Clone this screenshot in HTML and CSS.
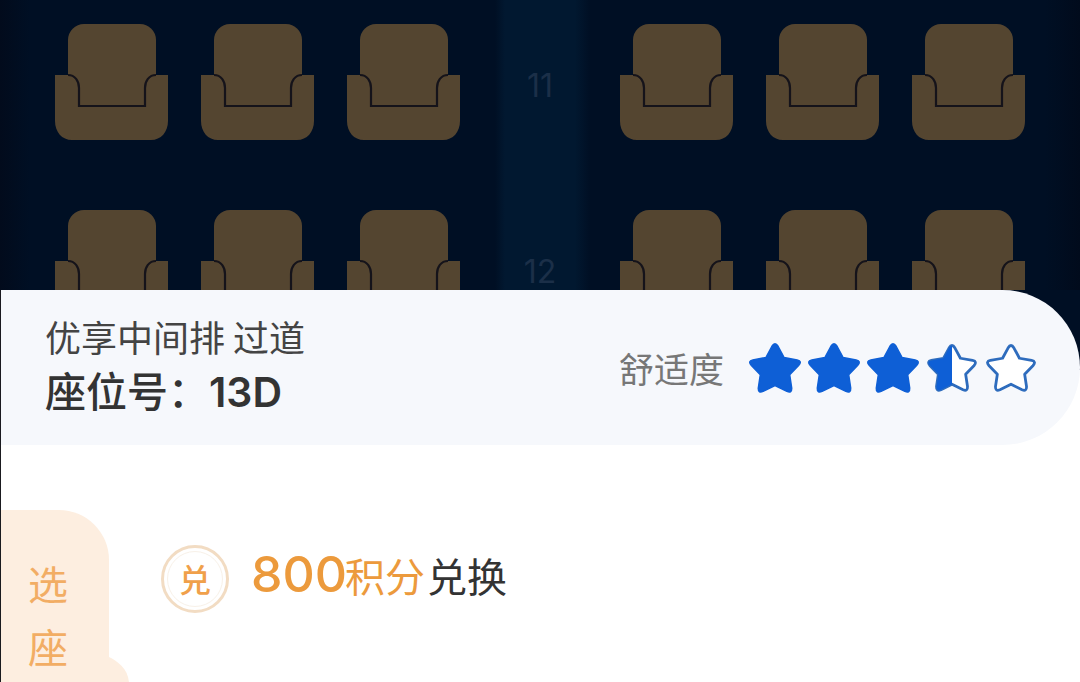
FILE: index.html
```html
<!DOCTYPE html>
<html lang="zh-CN">
<head>
  <meta charset="UTF-8">
  <title>选座</title>
  <link rel="stylesheet" href="styles.css">
</head>
<body>

<svg width="0" height="0" class="defs">
  <defs>
    <symbol id="seat" viewBox="0 0 113 116">
      <rect x="13" y="0" width="88" height="90" rx="16" fill="#544530"/>
      <path d="M0 51H13C20 51 24 57 24 64V82H90V64C90 57 94 51 101 51H113V97C113 108 106 116 96 116H17C7 116 0 108 0 97Z" fill="#544530"/>
      <path d="M13 51C20 51 24 57 24 64V82H90V64C90 57 94 51 101 51" fill="none" stroke="#15131a" stroke-width="2.2"/>
    </symbol>
    <path id="star" d="M23.8 4.5Q27 -1 30.2 4.5L36.1 15.5L49.2 17.9Q54.6 19 50.6 23.6L41.7 32.8L43.7 46Q44 51.5 38.9 49.4L27 43.5L15.1 49.4Q10 51.5 10.3 46L12.3 32.8L3.4 23.6Q-0.6 19 4.8 17.9L17.9 15.5Z"/>
    <clipPath id="half"><rect x="-2" y="-2" width="29" height="56"/></clipPath>
  </defs>
</svg>

<main class="screen">
  <section class="cabin">
    <div class="row">
      <div class="seats">
        <svg class="seat"><use href="#seat"/></svg>
        <svg class="seat"><use href="#seat"/></svg>
        <svg class="seat"><use href="#seat"/></svg>
      </div>
      <div class="row-no">11</div>
      <div class="seats">
        <svg class="seat"><use href="#seat"/></svg>
        <svg class="seat"><use href="#seat"/></svg>
        <svg class="seat"><use href="#seat"/></svg>
      </div>
    </div>
    <div class="row">
      <div class="seats">
        <svg class="seat"><use href="#seat"/></svg>
        <svg class="seat"><use href="#seat"/></svg>
        <svg class="seat"><use href="#seat"/></svg>
      </div>
      <div class="row-no">12</div>
      <div class="seats">
        <svg class="seat"><use href="#seat"/></svg>
        <svg class="seat"><use href="#seat"/></svg>
        <svg class="seat"><use href="#seat"/></svg>
      </div>
    </div>
  </section>

  <section class="sheet">
    <header class="seat-info">
      <div class="seat-text">
        <p class="seat-tags">优享中间排 过道</p>
        <p class="seat-no">座位号：<span class="seat-code">13D</span></p>
      </div>
      <div class="comfort">
        <span class="comfort-label">舒适度</span>
        <div class="stars">
          <svg class="star full" viewBox="0 0 54 52"><use href="#star"/></svg>
          <svg class="star full" viewBox="0 0 54 52"><use href="#star"/></svg>
          <svg class="star full" viewBox="0 0 54 52"><use href="#star"/></svg>
          <svg class="star half" viewBox="-2 -2 58 56">
            <use href="#star" class="star-line"/>
            <g clip-path="url(#half)"><use href="#star" class="star-fill"/></g>
          </svg>
          <svg class="star empty" viewBox="-2 -2 58 56"><use href="#star"/></svg>
        </div>
      </div>
    </header>

    <div class="offer">
      <div class="tab">
        <span>选</span>
        <span>座</span>
      </div>
      <div class="coin"><span>兑</span></div>
      <p class="offer-text"><span class="points"><b>800</b>积分</span>兑换</p>
    </div>
  </section>
</main>

</body>
</html>
```

FILE: styles.css
```css
* {
  box-sizing: border-box;
}

html, body {
  margin: 0;
  height: 682px;
  overflow: hidden;
}

body {
  background: #1a1a1f;
  font-family: "Noto Sans CJK SC", "Noto Sans", sans-serif;
}

.defs {
  display: block;
  height: 0;
}

.screen {
  width: 1080px;
  height: 682px;
  display: flex;
  flex-direction: column;
  overflow: hidden;
}

.cabin {
  height: 290px;
  flex: none;
  padding: 24px 55px 0;
  overflow: hidden;
  background: linear-gradient(to right, #020b1c 0, #000f24 30px, #000f24 495px, #011830 505px, #011830 575px, #000f24 590px, #000f24 1045px, #010b1c 1080px);
}

.row {
  display: flex;
  justify-content: space-between;
  margin-bottom: 70px;
}

.seats {
  display: flex;
  gap: 33px;
}

.seat {
  width: 113px;
  height: 116px;
  display: block;
}

.row-no {
  width: 50px;
  padding-top: 40px;
  text-align: center;
  font-family: "Inter", sans-serif;
  font-size: 32px;
  line-height: 44px;
  color: #1b2f48;
}

.sheet {
  flex: 1;
  display: flex;
  flex-direction: column;
  margin-left: 1px;
  background: linear-gradient(#000f24 80px, #fff 80px);
}

.seat-info {
  height: 155px;
  flex: none;
  display: flex;
  justify-content: space-between;
  align-items: center;
  padding: 0 42px 0 44px;
  background: #f6f8fc;
  border-radius: 0 80px 80px 0;
}

.seat-text {
  padding-bottom: 4px;
}

.seat-text p {
  margin: 0;
}

.seat-tags {
  font-size: 36px;
  line-height: 50px;
  color: #444;
}

.seat-no {
  font-size: 41px;
  line-height: 56px;
  font-weight: 500;
  color: #333;
}

.seat-code {
  font-family: "Inter", sans-serif;
  font-weight: 600;
  font-size: 41px;
}

.comfort {
  display: flex;
  align-items: center;
  gap: 24px;
}

.comfort-label {
  font-size: 35px;
  color: #777;
}

.stars {
  display: flex;
  gap: 5px;
}

.star {
  width: 54px;
  height: 52px;
  display: block;
  overflow: visible;
}

.star.full {
  fill: #0e5fd6;
  stroke: #0e5fd6;
  stroke-width: 1.5;
  stroke-linejoin: round;
}

.star.empty, .star-line {
  fill: #fff;
  stroke: #2e6cbd;
  stroke-width: 3;
  stroke-linejoin: round;
}

.star-fill {
  fill: #0e5fd6;
}

.offer {
  flex: 1;
  display: flex;
  align-items: flex-start;
  padding-top: 65px;
  background: #fff;
}

.tab {
  position: relative;
  width: 108px;
  height: 190px;
  flex: none;
  display: flex;
  flex-direction: column;
  align-items: center;
  gap: 23px;
  padding-top: 53px;
  padding-right: 14px;
  font-size: 40px;
  line-height: 40px;
  color: #f2ad64;
  background: #fdeee0;
  border-radius: 0 50px 0 0;
}

/* the bump where the tab meets the next item */
.tab::after {
  content: "";
  position: absolute;
  left: 108px;
  top: 147px;
  width: 20px;
  height: 40px;
  background: #fdeee0;
  clip-path: path("M0 0C8 4 20 12 20 27V40H0Z");
}

.tab span {
  display: block;
}

.coin {
  width: 68px;
  height: 68px;
  flex: none;
  margin: 35px 22px 0 52px;
  display: flex;
  align-items: center;
  justify-content: center;
  font-size: 32px;
  font-weight: 500;
  color: #f0a04a;
  border: 3px solid #f2dcc3;
  border-radius: 50%;
}

.coin span {
  width: 56px;
  height: 56px;
  line-height: 52px;
  text-align: center;
  border: 1px solid #f8f1e8;
  border-radius: 50%;
}

.offer-text {
  margin: 34px 0 0;
  font-size: 40px;
  line-height: 60px;
  color: #333;
}

.points {
  color: #ec9a3c;
  margin-right: 2px;
}

.points b {
  font-family: "Inter", sans-serif;
  font-size: 50px;
  font-weight: 500;
  margin-right: -2px;
}
```
